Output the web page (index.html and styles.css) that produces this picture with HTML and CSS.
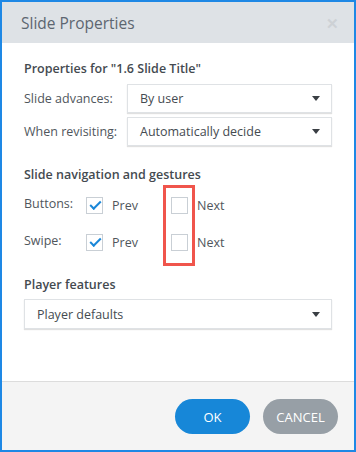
FILE: index.html
```html
<!DOCTYPE html>
<html lang="en">
<head>
	<meta charset="UTF-8">
	<title>Slide Properties</title>
	<link rel="stylesheet" href="styles.css">
</head>
<body>
	<div class="dialog">
		<div class="header">
			<span class="title">Slide Properties</span>
			<span class="close">&#x2715;</span>
		</div>

		<div class="content">
			<h2>Properties for "1.6 Slide Title"</h2>
			<div class="field">
				<label>Slide advances:</label>
				<div class="select">By user<span class="caret"></span></div>
			</div>
			<div class="field">
				<label>When revisiting:</label>
				<div class="select">Automatically decide<span class="caret"></span></div>
			</div>

			<h2 class="nav-title">Slide navigation and gestures</h2>
			<div class="nav">
				<div class="nav-row">
					<span class="nav-label">Buttons:</span>
					<span class="check on"></span><span class="opt">Prev</span>
					<span class="check"></span><span class="opt">Next</span>
				</div>
				<div class="nav-row">
					<span class="nav-label">Swipe:</span>
					<span class="check on"></span><span class="opt">Prev</span>
					<span class="check"></span><span class="opt">Next</span>
				</div>
				<div class="highlight"></div>
			</div>

			<h2 class="player-title">Player features</h2>
			<div class="select wide">Player defaults<span class="caret"></span></div>
		</div>

		<div class="footer">
			<button type="button" class="btn ok">OK</button>
			<button type="button" class="btn cancel">CANCEL</button>
		</div>
	</div>
</body>
</html>
```

FILE: styles.css
```css
:root{
	font-family: "Open Sans", "Noto Sans", Arial, sans-serif;
}

body{
	margin: 0;
	background: #fff;
}

.dialog{
	box-sizing: border-box;
	width: 356px;
	height: 452px;
	border: 2px solid #1e88e5;
	display: flex;
	flex-direction: column;
	color: #4a4f55;
}

.header{
	height: 41px;
	flex-shrink: 0;
	background: #dee2e6;
	display: flex;
	align-items: center;
	justify-content: space-between;
	padding: 0 15px 0 19px;
}

.title{
	font-size: 15.5px;
	color: #5d6670;
}

.close{
	font-size: 15px;
	color: #cdd1d5;
	font-weight: bold;
}

.content{
	flex: 1;
	padding: 17px 22px 0 22px;
}

h2{
	margin: 0 0 7px 0;
	font-size: 12.5px;
	font-weight: 600;
	color: #444a50;
}

.field{
	display: flex;
	align-items: center;
	margin-bottom: 4px;
}

label{
	width: 103px;
	font-size: 12.5px;
	color: #50565c;
}

.select{
	flex: 1;
	box-sizing: border-box;
	height: 29px;
	border: 1px solid #dfe2e5;
	box-shadow: 0 1px 1px rgba(0, 0, 0, 0.12);
	display: flex;
	align-items: center;
	justify-content: space-between;
	padding: 0 11px 0 12px;
	font-size: 12.5px;
	color: #454b51;
}

.select.wide{
	height: 30px;
}

.caret{
	width: 0;
	height: 0;
	border-left: 4px solid transparent;
	border-right: 4px solid transparent;
	border-top: 5px solid #3a3f44;
}

.nav-title{
	margin-top: 20px;
	margin-bottom: 4px;
}

.nav{
	position: relative;
}

.nav-row{
	display: flex;
	align-items: center;
	height: 37px;
}

.nav-label{
	width: 62px;
	font-size: 12.5px;
	color: #50565c;
	margin-top: -4px;
}

.check{
	box-sizing: border-box;
	width: 17px;
	height: 17px;
	border: 1px solid #c9cfd5;
	position: relative;
}

.check.on::after{
	content: "";
	position: absolute;
	left: 3px;
	top: 3px;
	width: 9px;
	height: 4px;
	border-left: 2.5px solid #1a87d8;
	border-bottom: 2.5px solid #1a87d8;
	transform: rotate(-45deg);
}

.opt{
	font-size: 12.5px;
	color: #50565c;
	margin-left: 9px;
	width: 59px;
}

.highlight{
	position: absolute;
	left: 139px;
	top: -2px;
	width: 26px;
	height: 75px;
	border: 3px solid #f0554c;
}

.player-title{
	margin-top: 15px;
	margin-bottom: 6px;
}

.footer{
	box-sizing: border-box;
	height: 69px;
	flex-shrink: 0;
	background: #f4f4f4;
	border-top: 1px solid #dcdcdc;
	display: flex;
	justify-content: flex-end;
	align-items: flex-start;
	padding: 17px 16px 0 0;
	gap: 13px;
}

.btn{
	width: 75px;
	height: 35px;
	border: none;
	border-radius: 18px;
	color: #fff;
	font-family: inherit;
	font-size: 13px;
	padding: 0;
}

.ok{
	background: #1787d8;
}

.cancel{
	background: #979fa6;
}
```
